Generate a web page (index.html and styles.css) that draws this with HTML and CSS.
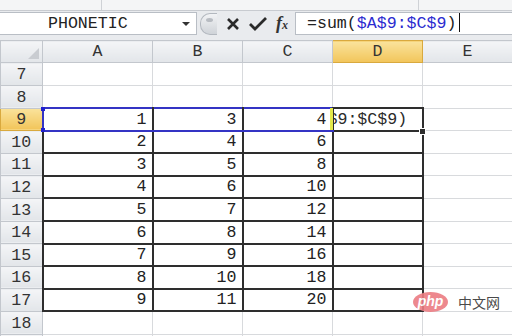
FILE: index.html
```html
<!DOCTYPE html>
<html lang="zh">
<head>
    <meta charset="UTF-8">
    <meta name="viewport" content="width=device-width, initial-scale=1.0">
    <title>sum</title>
    <link rel="stylesheet" href="styles.css">
</head>
<body>

<div class="ribbon">
    <div class="rb rb-a"></div>
    <div class="rb rb-b"></div>
    <div class="rb rb-c"></div>
</div>

<div class="fbar">
    <div class="namebox">
        <span class="name">PHONETIC</span>
        <span class="drop"></span>
    </div>
    <div class="fbtns">
        <span class="knob"></span>
        <svg class="ico" width="14" height="14" viewBox="0 0 14 14">
            <path d="M2 2 L12 12 M12 2 L2 12" stroke="#2a2a2a" stroke-width="2.6" fill="none"/>
        </svg>
        <svg class="ico" width="18" height="14" viewBox="0 0 18 14">
            <path d="M1 7 L6 12 L17 1" stroke="#2a2a2a" stroke-width="2.8" fill="none"/>
        </svg>
        <span class="fx">f<small>x</small></span>
    </div>
    <div class="finput">=sum(<span class="ref">$A$9:$C$9</span>)<span class="caret"></span></div>
</div>

<div class="sheet-wrap">
<table class="sheet">
    <colgroup>
        <col class="c-hd">
        <col class="c-a">
        <col class="c-n">
        <col class="c-n">
        <col class="c-n">
        <col class="c-n">
    </colgroup>
    <tr class="head">
        <th class="corner"><span class="tri"></span></th>
        <th>A</th><th>B</th><th>C</th><th class="act">D</th><th>E</th>
    </tr>
    <tr><th>7</th><td></td><td></td><td></td><td></td><td></td></tr>
    <tr><th>8</th><td></td><td></td><td></td><td></td><td></td></tr>
    <tr class="r9">
        <th class="act">9</th>
        <td class="d sel first">1</td><td class="d sel">3</td><td class="d sel last">4</td>
        <td class="d edit"><span class="edit-txt">$9:$C$9)</span></td><td></td>
    </tr>
    <tr><th>10</th><td class="d">2</td><td class="d">4</td><td class="d">6</td><td class="d"></td><td></td></tr>
    <tr><th>11</th><td class="d">3</td><td class="d">5</td><td class="d">8</td><td class="d"></td><td></td></tr>
    <tr><th>12</th><td class="d">4</td><td class="d">6</td><td class="d">10</td><td class="d"></td><td></td></tr>
    <tr><th>13</th><td class="d">5</td><td class="d">7</td><td class="d">12</td><td class="d"></td><td></td></tr>
    <tr><th>14</th><td class="d">6</td><td class="d">8</td><td class="d">14</td><td class="d"></td><td></td></tr>
    <tr><th>15</th><td class="d">7</td><td class="d">9</td><td class="d">16</td><td class="d"></td><td></td></tr>
    <tr><th>16</th><td class="d">8</td><td class="d">10</td><td class="d">18</td><td class="d"></td><td></td></tr>
    <tr><th>17</th><td class="d">9</td><td class="d">11</td><td class="d">20</td><td class="d"></td><td></td></tr>
    <tr><th>18</th><td></td><td></td><td></td><td></td><td></td></tr>
    <tr class="tail"><th></th><td></td><td></td><td></td><td></td><td></td></tr>
</table>

<span class="hnd hnd-tl"></span>
<span class="hnd hnd-bl"></span>
<span class="ymark"></span>
<span class="fill"></span>

<div class="wm">
    <span class="wm-logo">php</span>
    <span class="wm-txt">中文网</span>
</div>
</div>

</body>
</html>
```

FILE: styles.css
```css
body {
    margin: 0;
    width: 512px;
    height: 336px;
    overflow: hidden;
    background: #ffffff;
    font-family: "Liberation Mono", "Courier New", monospace;
    color: #222;
}

/* ribbon remnant */
.ribbon {
    display: flex;
    height: 10px;
    background: #f4f5f6;
    border-bottom: 1px solid #c8cbd0;
}
.rb {
    height: 100%;
}
.rb-a {
    width: 101px;
    border-right: 1px solid #cfd2d6;
}
.rb-b {
    width: 316px;
    border-right: 1px solid #cfd2d6;
}
.rb-c {
    flex: 1;
}

/* formula bar */
.fbar {
    display: flex;
    align-items: center;
    height: 29px;
    background: #e9ebee;
}
.namebox {
    display: flex;
    align-items: center;
    width: 197px;
    height: 23px;
    margin-top: -4px;
    background: #fff;
    border: 1px solid #b9bec5;
    border-left: none;
    box-sizing: border-box;
}
.name {
    flex: 1;
    padding-left: 48px;
    font-size: 16.6px;
}
.drop {
    width: 0;
    height: 0;
    margin-right: 6px;
    border-left: 4px solid transparent;
    border-right: 4px solid transparent;
    border-top: 4px solid #333;
}
.fbtns {
    display: flex;
    align-items: center;
    gap: 9px;
    width: 95px;
    height: 23px;
    margin-top: -4px;
    margin-left: 3px;
}
.knob {
    width: 16px;
    height: 20px;
    border-radius: 10px 0 0 10px;
    background: linear-gradient(#f2f3f5, #cfd3d8);
    border: 1px solid #b3b8bf;
    border-right: none;
    position: relative;
}
.knob::after {
    content: "";
    position: absolute;
    left: 5px;
    top: 4px;
    width: 7px;
    height: 4px;
    border-radius: 50%;
    background: #b8bcc2;
}
.ico {
    display: block;
}
.fx {
    font-family: "Liberation Serif", serif;
    font-style: italic;
    font-weight: bold;
    font-size: 18px;
    color: #333;
}
.fx small {
    font-size: 12px;
}
.finput {
    flex: 1;
    height: 23px;
    margin-top: -4px;
    background: #fff;
    border: 1px solid #b9bec5;
    border-right: none;
    box-sizing: border-box;
    padding-left: 11px;
    font-size: 16.6px;
    line-height: 21px;
    white-space: nowrap;
}
.ref {
    color: #2b2bd0;
}
.caret {
    display: inline-block;
    width: 1px;
    height: 19px;
    margin-left: 3px;
    vertical-align: -4px;
    background: #111;
}

/* sheet */
.sheet-wrap {
    position: relative;
}
.sheet {
    width: 512px;
    table-layout: fixed;
    border-collapse: collapse;
    font-size: 16.6px;
}
.c-hd { width: 42px; }
.c-a { width: 110px; }
.c-n { width: 90px; }

.sheet tr {
    height: 22.6px;
}
.sheet tr.head {
    height: 22.4px;
}
.sheet th {
    padding: 0;
    font-weight: normal;
    color: #333;
    background: linear-gradient(#f4f5f7, #e2e5e9);
    border: 1px solid #c3c7cd;
    text-align: center;
    vertical-align: bottom;
    line-height: 20px;
}
.sheet th.act {
    background: linear-gradient(#fae39c, #f2c55a);
    border-color: #d9a93e;
}
.corner {
    text-align: right !important;
}
.tri {
    display: inline-block;
    width: 0;
    height: 0;
    margin: 0 3px 3px 0;
    border-left: 11px solid transparent;
    border-bottom: 11px solid #c9ccd1;
    vertical-align: bottom;
}
.sheet td {
    padding: 0 5px 0 0;
    border: 1px solid #d8dadd;
    text-align: right;
    vertical-align: bottom;
    line-height: 20px;
    white-space: nowrap;
    overflow: hidden;
}
.sheet td.d {
    border: 2px solid #2e2e2e;
}
.sheet td.sel {
    border-top: 2px solid #3434c4;
    border-bottom: 2px solid #3434c4;
}
.sheet td.first {
    border-left: 2px solid #3434c4;
}
.sheet td.edit {
    text-align: left;
    padding: 0;
}
.edit-txt {
    display: inline-block;
    margin-left: -6px;
    color: #2a2a2a;
}

/* overlays on the sheet */
.hnd {
    position: absolute;
    left: 41px;
    width: 4px;
    height: 4px;
    background: #2020d0;
}
.hnd-tl { top: 67px; }
.hnd-bl { top: 88px; }
.ymark {
    position: absolute;
    left: 330px;
    top: 68px;
    width: 3px;
    height: 22px;
    background: #e3e84a;
}
.fill {
    position: absolute;
    left: 419px;
    top: 88px;
    width: 5px;
    height: 5px;
    background: #2e2e2e;
    border: 1px solid #fff;
}

.wm {
    position: absolute;
    left: 413px;
    top: 252px;
    display: flex;
    align-items: center;
    gap: 10px;
}
.wm-logo {
    width: 35px;
    height: 20px;
    border-radius: 50%;
    background: #ec7c82;
    color: #fff;
    font-family: "Liberation Sans", Arial, sans-serif;
    font-style: italic;
    font-weight: bold;
    font-size: 14px;
    line-height: 19px;
    text-align: center;
    opacity: 0.9;
}
.wm-txt {
    font-family: "Noto Sans CJK SC", sans-serif;
    font-size: 14px;
    color: #4a4a4a;
}
```
